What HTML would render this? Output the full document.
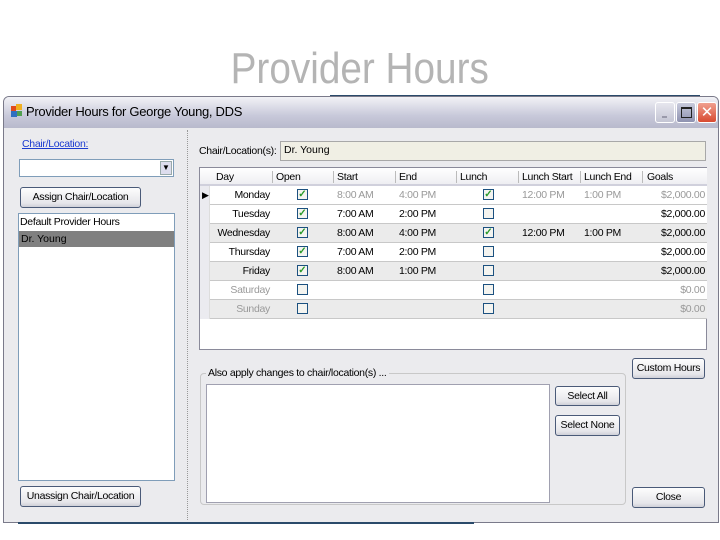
<!DOCTYPE html>
<html><head><meta charset="utf-8"><style>
*{box-sizing:border-box;margin:0;padding:0}
body{width:720px;height:540px;background:#fff;position:relative;overflow:hidden;font-family:"Liberation Sans",sans-serif;font-size:11px;color:#000}
.a{position:absolute}
.btn{position:absolute;border:1px solid #4a5a78;border-radius:3px;background:linear-gradient(#fdfdfd,#e6e6ea 80%,#cfd0d8);text-align:center;font-size:10.5px;letter-spacing:-0.3px}
.wt{position:absolute;background:#fff;border:1px solid #7f9db9}
.cb{position:absolute;width:11px;height:11px;border:1px solid #1c5180;background:#f4f4f0;font-size:10px;line-height:9px;text-align:center;color:#2a9a2a;font-weight:bold}
.r{position:absolute;left:0;width:507px;height:19px;border-bottom:1px solid #c8c8c8}
.r span{position:absolute;top:3px;font-size:10.5px;letter-spacing:-0.3px}
.g{color:#999}
</style></head><body>
<div class="a" style="left:0;top:42px;width:720px;text-align:center;font-size:44px;color:#b4b4b4;line-height:54px"><span style="display:inline-block;transform:scaleX(0.88)">Provider Hours</span></div>
<div class="a" style="left:330px;top:95px;width:370px;height:2px;background:#2a4a6a"></div>
<!-- window -->
<div class="a" style="left:3px;top:96px;width:716px;height:427px;border:1px solid #7a7a8a;border-radius:6px 6px 0 0;background:#ebebee"></div>
<div class="a" style="left:4px;top:97px;width:714px;height:31px;border-radius:5px 5px 0 0;background:linear-gradient(#f2f2f6,#c8c9da 60%,#b8b9cc)"></div>
<div class="a" style="left:11px;top:106px;width:5px;height:5px;background:#e04a1a"></div>
<div class="a" style="left:16px;top:104px;width:6px;height:6px;background:#f0b020"></div>
<div class="a" style="left:11px;top:111px;width:6px;height:6px;background:#3070c0"></div>
<div class="a" style="left:17px;top:111px;width:5px;height:5px;background:#50a050"></div>
<div class="a" style="left:26px;top:104px;font-size:13px;letter-spacing:-0.3px">Provider Hours for George Young, DDS</div>
<div class="a" style="left:655px;top:102px;width:20px;height:21px;border:1px solid #fff;border-radius:3px;background:linear-gradient(#e6e6ee,#c4c5d4)"><div class="a" style="left:6px;top:13px;width:5px;height:2px;background:#99a"></div></div>
<div class="a" style="left:676px;top:102px;width:20px;height:21px;border:1px solid #fff;border-radius:3px;background:linear-gradient(#c8cadc,#8e92b0)"><div class="a" style="left:4px;top:4px;width:11px;height:11px;border:1px solid #222;border-top-width:2px"></div></div>
<div class="a" style="left:697px;top:102px;width:20px;height:21px;border:1px solid #fff;border-radius:3px;background:linear-gradient(#f0a090,#d84a30);color:#fff;font-size:15px;line-height:19px;text-align:center">✕</div>
<!-- left -->
<div class="a" style="left:22px;top:138px;color:#1a3ad0;text-decoration:underline;font-size:10.5px;letter-spacing:-0.3px">Chair/Location:</div>
<div class="wt" style="left:19px;top:159px;width:155px;height:18px"><div class="a" style="right:1px;top:1px;width:12px;height:14px;border:1px solid #9aa;background:#dde;font-size:8px;text-align:center;line-height:12px">▼</div></div>
<div class="btn" style="left:20px;top:187px;width:121px;height:21px;line-height:19px">Assign Chair/Location</div>
<div class="wt" style="left:18px;top:213px;width:157px;height:268px">
<div class="a" style="left:1px;top:2px;font-size:10.5px;letter-spacing:-0.3px">Default Provider Hours</div>
<div class="a" style="left:0;top:17px;width:155px;height:16px;background:#808080;padding-left:2px;font-size:10.5px;line-height:16px">Dr. Young</div></div>
<div class="btn" style="left:20px;top:486px;width:121px;height:21px;line-height:19px">Unassign Chair/Location</div>
<div class="a" style="left:187px;top:130px;height:390px;border-left:1px dotted #999"></div>
<!-- right -->
<div class="a" style="left:199px;top:145px;font-size:10.5px;letter-spacing:-0.3px">Chair/Location(s):</div>
<div class="a" style="left:280px;top:141px;width:426px;height:20px;border:1px solid #a8a8a8;background:#f0efe4;padding:2px 3px;font-size:10.5px">Dr. Young</div>
<div class="wt" style="left:199px;top:167px;width:508px;height:183px;border-color:#8a8a9a">
<div class="r" style="top:0;height:18px;background:linear-gradient(#fff,#eeeef2);border-bottom:2px solid #d0d0dc"><span style="left:16px">Day</span><span style="left:76px">Open</span><span style="left:137px">Start</span><span style="left:199px">End</span><span style="left:260px">Lunch</span><span style="left:322px">Lunch Start</span><span style="left:384px">Lunch End</span><span style="left:447px">Goals</span>
<div class="a" style="left:72px;top:3px;height:12px;border-left:1px solid #bbb"></div><div class="a" style="left:133px;top:3px;height:12px;border-left:1px solid #bbb"></div><div class="a" style="left:195px;top:3px;height:12px;border-left:1px solid #bbb"></div><div class="a" style="left:256px;top:3px;height:12px;border-left:1px solid #bbb"></div><div class="a" style="left:318px;top:3px;height:12px;border-left:1px solid #bbb"></div><div class="a" style="left:380px;top:3px;height:12px;border-left:1px solid #bbb"></div><div class="a" style="left:442px;top:3px;height:12px;border-left:1px solid #bbb"></div></div>
<div class="r" style="top:18px;background:#fff"><span style="left:2px;font-size:9px;top:4px">▶</span><span style="right:437px">Monday</span><div class="cb" style="left:97px;top:3px">✓</div><span class="g" style="left:137px">8:00 AM</span><span class="g" style="left:199px">4:00 PM</span><div class="cb" style="left:283px;top:3px">✓</div><span class="g" style="left:322px">12:00 PM</span><span class="g" style="left:384px">1:00 PM</span><span class="g" style="right:2px">$2,000.00</span></div>
<div class="r" style="top:37px;background:#fff"><span style="right:437px">Tuesday</span><div class="cb" style="left:97px;top:3px">✓</div><span style="left:137px">7:00 AM</span><span style="left:199px">2:00 PM</span><div class="cb" style="left:283px;top:3px"></div><span style="right:2px">$2,000.00</span></div>
<div class="r" style="top:56px;background:#ebebeb"><span style="right:437px">Wednesday</span><div class="cb" style="left:97px;top:3px">✓</div><span style="left:137px">8:00 AM</span><span style="left:199px">4:00 PM</span><div class="cb" style="left:283px;top:3px">✓</div><span style="left:322px">12:00 PM</span><span style="left:384px">1:00 PM</span><span style="right:2px">$2,000.00</span></div>
<div class="r" style="top:75px;background:#fff"><span style="right:437px">Thursday</span><div class="cb" style="left:97px;top:3px">✓</div><span style="left:137px">7:00 AM</span><span style="left:199px">2:00 PM</span><div class="cb" style="left:283px;top:3px"></div><span style="right:2px">$2,000.00</span></div>
<div class="r" style="top:94px;background:#ebebeb"><span style="right:437px">Friday</span><div class="cb" style="left:97px;top:3px">✓</div><span style="left:137px">8:00 AM</span><span style="left:199px">1:00 PM</span><div class="cb" style="left:283px;top:3px"></div><span style="right:2px">$2,000.00</span></div>
<div class="r" style="top:113px;background:#fff"><span class="g" style="right:437px">Saturday</span><div class="cb" style="left:97px;top:3px"></div><div class="cb" style="left:283px;top:3px"></div><span class="g" style="right:2px">$0.00</span></div>
<div class="r" style="top:132px;background:#ebebeb"><span class="g" style="right:437px">Sunday</span><div class="cb" style="left:97px;top:3px"></div><div class="cb" style="left:283px;top:3px"></div><span class="g" style="right:2px">$0.00</span></div>
<div class="a" style="left:0;top:18px;width:10px;height:133px;background:#ebebf0;border-right:1px solid #ddd"></div>
<div class="a" style="left:2px;top:22px;font-size:9px">▶</div>
</div>
<div class="a" style="left:200px;top:373px;width:426px;height:132px;border:1px solid #c8c8c8;border-radius:4px"></div>
<div class="a" style="left:206px;top:367px;background:#ebebee;padding:0 2px;font-size:10.5px;letter-spacing:-0.3px">Also apply changes to chair/location(s) ...</div>
<div class="wt" style="left:206px;top:384px;width:344px;height:119px;border-color:#a0a0b0"></div>
<div class="btn" style="left:555px;top:386px;width:65px;height:20px;line-height:18px">Select All</div>
<div class="btn" style="left:555px;top:415px;width:65px;height:21px;line-height:19px">Select None</div>
<div class="btn" style="left:632px;top:358px;width:73px;height:21px;line-height:19px">Custom Hours</div>
<div class="btn" style="left:632px;top:487px;width:73px;height:21px;line-height:19px">Close</div>
<div class="a" style="left:18px;top:522px;width:456px;height:2px;background:#2a4a6a"></div>
</body></html>
